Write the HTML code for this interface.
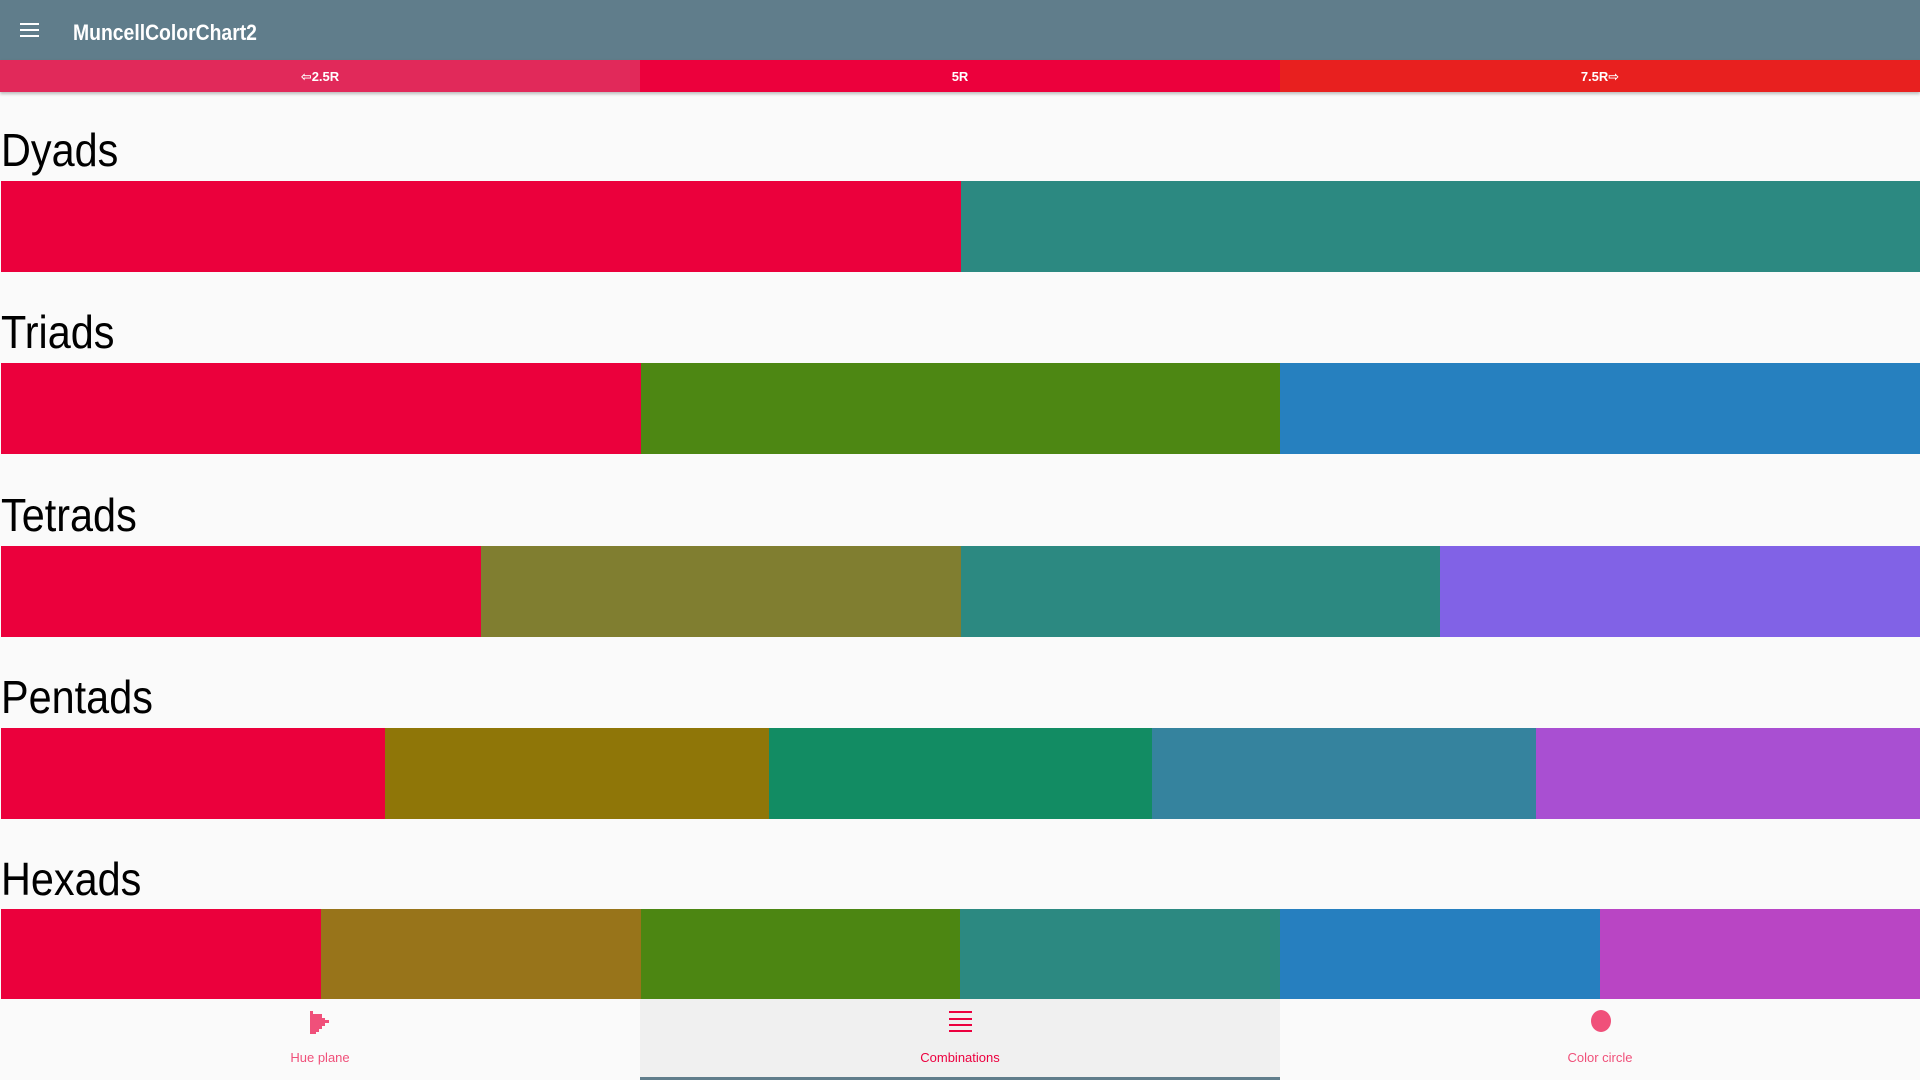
<!DOCTYPE html>
<html><head><meta charset="utf-8"><style>
*{margin:0;padding:0;box-sizing:border-box}
body{width:1920px;height:1080px;background:#fafafa;font-family:"Liberation Sans","DejaVu Sans",sans-serif;position:relative;overflow:hidden}
.bar{position:absolute;left:0;top:0;width:1920px;height:60px;background:#607d8b}
.title{position:absolute;left:73px;top:20px;color:#fff;font-size:22px;font-weight:bold;transform:scaleX(.88);transform-origin:left}
.hamb{position:absolute;left:20px;top:23px;width:19px;height:14px;border-top:2px solid #fff;border-bottom:2px solid #fff}
.hamb:after{content:"";position:absolute;left:0;top:4px;width:19px;height:2px;background:#fff}
.tabs{position:absolute;top:60px;left:0;width:1920px;height:32px;display:flex;box-shadow:0 2px 3px rgba(0,0,0,.25)}
.tabs div{flex:1;color:#fff;font-weight:bold;font-size:13px;text-align:center;line-height:33px}
.h{position:absolute;left:1px;font-size:46px;color:#000;transform:scaleX(.9);transform-origin:left;line-height:1}
.row{position:absolute;left:1px;width:1919px;height:91px;display:flex}
.row div{flex:1}
.nav{position:absolute;top:999px;left:0;width:1920px;height:81px;display:flex}
.nav>div{flex:1;position:relative;text-align:center;color:#f0507a;font-size:13px}
.nav .lbl{position:absolute;top:51px;width:100%;left:0}
</style></head><body>
<div class="bar"><div class="hamb"></div><div class="title">MuncellColorChart2</div></div>
<div class="tabs"><div style="background:#e1295a">⇦2.5R</div><div style="background:#ec003c">5R</div><div style="background:#e8201f">7.5R⇨</div></div>

<div class="h" style="top:127px">Dyads</div>
<div class="row" style="top:181px"><div style="background:#eb003c"></div><div style="background:#2c8981"></div></div>
<div class="h" style="top:309px">Triads</div>
<div class="row" style="top:363px"><div style="background:#eb003c"></div><div style="background:#4d8713"></div><div style="background:#2680bf"></div></div>
<div class="h" style="top:492px">Tetrads</div>
<div class="row" style="top:546px"><div style="background:#eb003c"></div><div style="background:#807e30"></div><div style="background:#2c8981"></div><div style="background:#8162e6"></div></div>
<div class="h" style="top:674px">Pentads</div>
<div class="row" style="top:728px"><div style="background:#eb003c"></div><div style="background:#8f7608"></div><div style="background:#128c63"></div><div style="background:#35839e"></div><div style="background:#a94fd2"></div></div>
<div class="h" style="top:856px">Hexads</div>
<div class="row" style="top:909px;height:90px"><div style="background:#eb003c"></div><div style="background:#98741a"></div><div style="background:#4c8612"></div><div style="background:#2c8981"></div><div style="background:#267fbf"></div><div style="background:#b945c4"></div></div>

<div class="nav">
<div><svg style="position:absolute;left:310px;top:12px" width="24" height="24"><path d="M0 0h3v3h9v4h3v2h4v3h-4v3h-3v3h-3v3h-3v2h-6z" fill="#f0507a"/></svg><div class="lbl">Hue plane</div></div>
<div style="background:#f0f0f0;border-bottom:3px solid #607d8b"><svg style="position:absolute;left:309px;top:12px" width="24" height="24" fill="#ec003f"><rect x="0" y="0" width="23" height="2"/><rect x="0" y="7" width="23" height="2"/><rect x="0" y="13" width="23" height="2"/><rect x="0" y="19" width="23" height="2"/></svg><div class="lbl" style="color:#ec003f">Combinations</div></div>
<div><div style="position:absolute;left:311px;top:11px;width:20px;height:22px;border-radius:50%;background:#f0507a"></div><div class="lbl">Color circle</div></div>
</div>
</body></html>
